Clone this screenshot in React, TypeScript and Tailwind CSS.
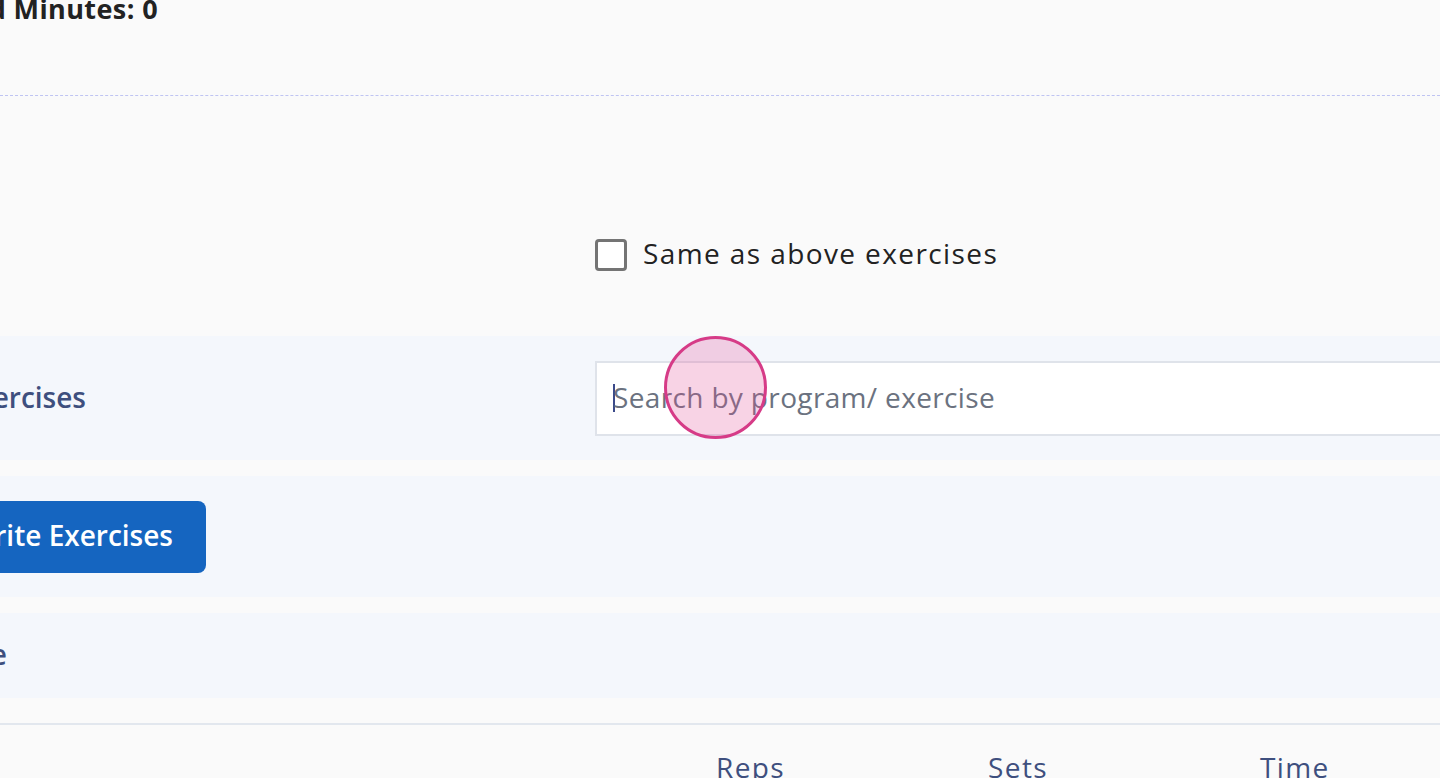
import React from "react";

export default function App() {
  return (
    <div className="relative min-h-screen w-full overflow-hidden bg-[#fafafa] font-['Open_Sans',sans-serif]">
      {/* header */}
      <div className="flex h-[95px] items-start">
        <div className="-mt-[9px] flex w-[158px] justify-end">
          <span className="whitespace-nowrap text-[27px] font-bold leading-[36px] tracking-[0.4px] text-[#222222]">
            Total Added Minutes: 0
          </span>
        </div>
      </div>
      <div className="border-t border-dashed border-[#bfc4f2]" />

      {/* same as above */}
      <div className="flex h-[240px] items-start pt-[139px]">
        <div className="w-[595px]" />
        <label className="flex items-center gap-[16px]">
          <span className="block h-[32px] w-[32px] rounded-[4px] border-[3px] border-[#747474] bg-white" />
          <span className="pb-[4px] text-[28px] leading-[36px] tracking-[1.4px] text-[#222222]">Same as above exercises</span>
        </label>
      </div>

      {/* search band */}
      <div className="flex h-[124px] items-center bg-[#f4f7fc]">
        <div className="flex w-[595px] shrink-0">
          <div className="flex w-[86px] justify-end">
            <span className="whitespace-nowrap pb-[3px] text-[28px] font-semibold leading-[36px] text-[#3e4f7e]">Search Exercises</span>
          </div>
        </div>
        <div className="flex h-[75px] min-w-[900px] flex-1 items-center border-2 border-[#dfe3ea] bg-white pl-[16px]">
          <span className="h-[28px] w-[2px] bg-[#3b4a8a]" />
          <span className="-ml-[2px] whitespace-nowrap pb-[3px] text-[28px] font-medium leading-[36px] tracking-[0.35px] text-[#6b7280]">Search by program/ exercise</span>
        </div>
      </div>

      {/* favorite band */}
      <div className="mt-[16px] flex h-[121px] items-center bg-[#f4f7fc]">
        <div className="flex w-[206px] justify-end">
          <button className="flex h-[72px] items-center whitespace-nowrap rounded-[8px] bg-[#1565c0] pb-[3px] pl-[30px] pr-[33px] text-[28px] font-semibold leading-[36px] text-white">
            Favorite Exercises
          </button>
        </div>
      </div>

      {/* third band */}
      <div className="mt-[16px] flex h-[85px] items-center bg-[#f4f7fc]">
        <div className="flex w-[7px] justify-end">
          <span className="whitespace-nowrap pb-[3px] text-[28px] font-semibold leading-[36px] text-[#3e4f7e]">Schedule</span>
        </div>
      </div>

      <div className="mt-[25px] border-t-2 border-[#e2e7ee]" />

      {/* table header */}
      <div className="flex pt-[24px] text-[28px] font-medium leading-[36px] tracking-[1.4px] text-[#3e4f7e]">
        <div className="w-[716px]" />
        <div className="w-[272px]">Reps</div>
        <div className="w-[272px]">Sets</div>
        <div className="w-[180px]">Time</div>
      </div>

      {/* click indicator */}
      <div className="absolute left-[664px] top-[336px] h-[103px] w-[103px] rounded-full border-[3px] border-[#d63b87] bg-[rgba(228,80,150,0.25)]" />
    </div>
  );
}
